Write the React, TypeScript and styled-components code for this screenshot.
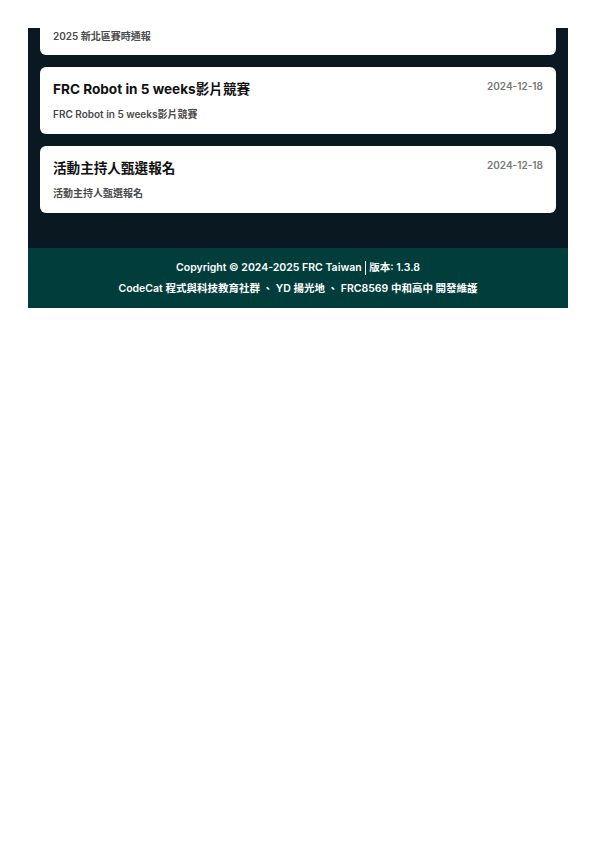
import React from "react";
import styled, { createGlobalStyle } from "styled-components";

const Global = createGlobalStyle`
  html, body { margin: 0; padding: 0; background: #ffffff; }
  body { font-family: Inter, "Noto Sans CJK TC", "Noto Sans", sans-serif; }
  * { box-sizing: border-box; }
`;

const Page = styled.div`
  padding: 28px 27px 0 28px;
`;

const Section = styled.main`
  background: #0a1821;
  padding: 0 12px 35px;
  display: flex;
  flex-direction: column;
  gap: 12px;
`;

const Card = styled.article<{ $cut?: boolean }>`
  background: #ffffff;
  border-radius: ${(p) => (p.$cut ? "0 0 6px 6px" : "6px")};
  padding: ${(p) => (p.$cut ? "2px 13px 13px" : "13px 13px 14px")};
`;

const Head = styled.div`
  display: flex;
  justify-content: space-between;
  align-items: flex-start;
`;

const Title = styled.h3`
  margin: 0;
  font-size: 13.6px;
  line-height: 18px;
  font-weight: 700;
  color: #111111;
`;

const DateText = styled.span`
  font-size: 10px;
  line-height: 12px;
  font-weight: 600;
  color: #777777;
`;

const Summary = styled.p<{ $first?: boolean }>`
  margin: ${(p) => (p.$first ? "0" : "10px 0 0")};
  font-size: 10px;
  line-height: 12px;
  font-weight: 600;
  color: #4a4a4a;
`;

const Footer = styled.footer`
  background: #013d3b;
  padding: 13px 0 12px;
  display: flex;
  flex-direction: column;
  align-items: center;
  gap: 7px;
`;

const FootLine = styled.div`
  font-size: 10.5px;
  line-height: 14px;
  font-weight: 600;
  color: #ffffff;
  display: flex;
  align-items: center;
  white-space: pre;
`;

const Bar = styled.span`
  display: inline-block;
  width: 1.5px;
  height: 14px;
  background: #ffffff;
  margin: 0 3px;
`;

const items = [
  { title: "FRC Robot in 5 weeks影片競賽", date: "2024-12-18", summary: "FRC Robot in 5 weeks影片競賽" },
  { title: "活動主持人甄選報名", date: "2024-12-18", summary: "活動主持人甄選報名" },
];

export default function App() {
  return (
    <>
      <Global />
      <Page>
        <Section>
          <Card $cut>
            <Summary $first>2025 新北區賽時通報</Summary>
          </Card>
          {items.map((it) => (
            <Card key={it.title}>
              <Head>
                <Title>{it.title}</Title>
                <DateText>{it.date}</DateText>
              </Head>
              <Summary>{it.summary}</Summary>
            </Card>
          ))}
        </Section>
        <Footer>
          <FootLine>
            Copyright © 2024-2025 FRC Taiwan<Bar />版本: 1.3.8
          </FootLine>
          <FootLine>CodeCat 程式與科技教育社群 、 YD 揚光地 、 FRC8569 中和高中 開發維護</FootLine>
        </Footer>
      </Page>
    </>
  );
}
